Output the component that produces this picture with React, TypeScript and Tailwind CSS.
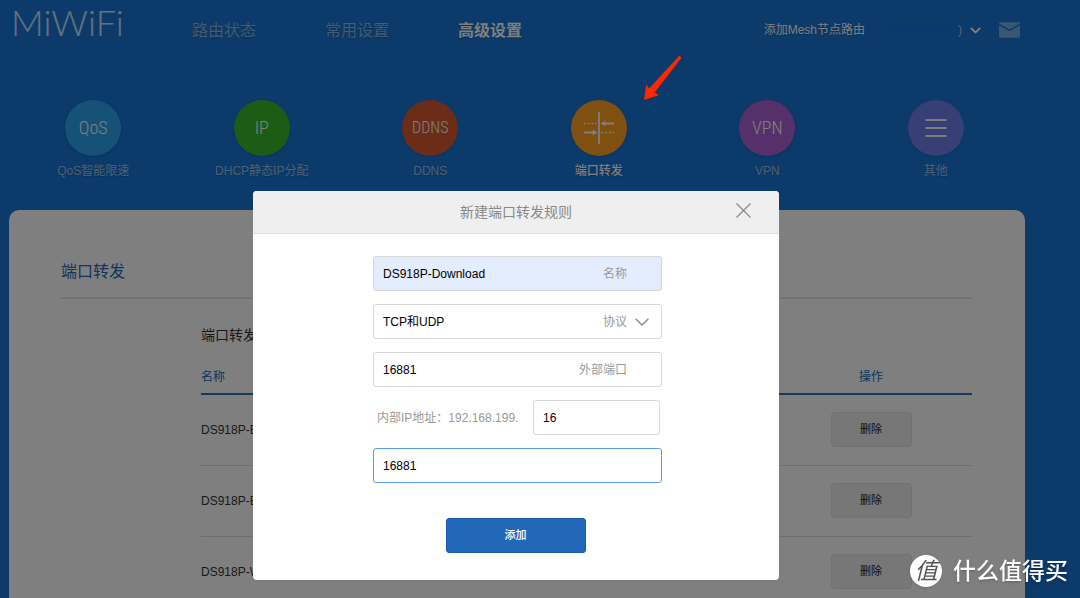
import type { ReactNode } from "react";

const navItems = [
  { name: "路由状态", active: false },
  { name: "常用设置", active: false },
  { name: "高级设置", active: true },
];

const condensed =
  "font-['Roboto_Condensed','Liberation_Sans_Narrow','Open_Sans_Condensed','DejaVu_Sans_Condensed',sans-serif]";

const features: { label: string; color: string; active?: boolean; icon: ReactNode }[] = [
  { label: "QoS智能限速", color: "bg-[#2ca2ee]", icon: <CircleText>QoS</CircleText> },
  { label: "DHCP静态IP分配", color: "bg-[#3bb828]", icon: <CircleText>IP</CircleText> },
  { label: "DDNS", color: "bg-[#d65a2e]", icon: <CircleText small>DDNS</CircleText> },
  { label: "端口转发", color: "bg-[#ffa021]", active: true, icon: <ForwardIcon /> },
  { label: "VPN", color: "bg-[#ac60d4]", icon: <CircleText>VPN</CircleText> },
  { label: "其他", color: "bg-[#707eec]", icon: <MenuIcon /> },
];

const rules = ["DS918P-BT", "DS918P-EM", "DS918P-Web"];

function CircleText({ children, small }: { children: ReactNode; small?: boolean }) {
  return (
    <span className={`leading-6 font-light ${small ? "text-base" : "text-lg"} ${condensed}`}>
      {children}
    </span>
  );
}

function ForwardIcon() {
  return (
    <svg width="32" height="32" viewBox="0 0 32 32" fill="none" stroke="currentColor">
      <path d="M16 0v32" strokeWidth="1.8" />
      <path d="M1 11.5h12.5M18.5 20.5H31" strokeWidth="1.6" strokeDasharray="1.8 1.9" />
      <path d="M22 11.5h9M1 20.5h9" strokeWidth="1.8" />
      <path d="M17.5 11.5l5-2.8v5.6zM14.8 20.5l-5-2.8v5.6z" fill="currentColor" stroke="none" />
    </svg>
  );
}

function MenuIcon() {
  return (
    <svg width="22" height="20" viewBox="0 0 22 20" stroke="currentColor" strokeWidth="1.8">
      <path d="M.5 2h21M.5 10h21M.5 18h21" />
    </svg>
  );
}

function Header() {
  return (
    <header className="flex h-[60px] items-center text-white">
      <a href="#" className="w-[183px] pb-4 pl-0.5 font-[Lato] text-[36px] leading-[44px] font-light text-white/80">
        MiWiFi
      </a>
      <nav className="flex gap-[69px] pt-0.5 text-base leading-6 text-shadow-xs">
        {navItems.map((item) => (
          <a key={item.name} href="#" className={item.active ? "font-bold" : "text-white/50"}>
            {item.name}
          </a>
        ))}
      </nav>
      <div className="ml-auto flex items-center pr-[5px] text-xs">
        <a href="#" className="text-shadow-xs">
          添加Mesh节点路由
        </a>
        <span className="ml-5 h-3.5 w-[73px] rounded-full bg-[#1573dc]" />
        <button className="flex items-center gap-2" aria-label="账户">
          <span className="text-white/60">)</span>
          <svg width="11" height="7" viewBox="0 0 11 7" fill="none" stroke="currentColor" strokeWidth="1.8">
            <path d="M.8.8l4.7 4.7L10.2.8" />
          </svg>
        </button>
        <button className="ml-[18px] text-white/40" aria-label="消息">
          <svg width="21" height="16" viewBox="0 0 22 16" fill="currentColor">
            <path d="M1.5 0h19A1.3 1.3 0 0 1 22 1.2L11 7.6 0 1.2A1.3 1.3 0 0 1 1.5 0z" />
            <path d="M0 3l11 6.3L22 3v11.5a1.5 1.5 0 0 1-1.5 1.5h-19A1.5 1.5 0 0 1 0 14.500z" />
          </svg>
        </button>
      </div>
    </header>
  );
}

function FeatureTabs() {
  return (
    <div className="grid grid-cols-6 pt-10 pr-[5px] pb-[31px] text-white">
      {features.map((f) => (
        <a key={f.label} href="#" className="flex flex-col items-center gap-[7px]">
          <span className={`flex size-14 items-center justify-center rounded-full shadow-sm ${f.color}`}>
            {f.icon}
          </span>
          <span
            className={`text-xs leading-4 text-shadow-xs ${f.active ? "font-medium" : "text-white/60"}`}
          >
            {f.label}
          </span>
        </a>
      ))}
    </div>
  );
}

function RulePanel() {
  return (
    <main className="flex-1 rounded-t-[10px] bg-white pt-[50px] pr-[53px] pl-[52px]">
      <h1 className="border-b-2 border-[#e8e8e8] pb-[13px] text-base leading-6 text-[#2468b8]">端口转发</h1>
      <section className="pt-[26px] pl-[140px]">
        <h2 className="text-sm leading-5 text-[#333]">端口转发规则列表</h2>
        <table className="mt-4 w-full text-xs">
          <thead>
            <tr className="h-[33px] border-b-2 border-[#2c72c0] text-[#2468b8]">
              <th className="text-left font-normal">名称</th>
              <th className="w-[202px] text-center font-normal">操作</th>
            </tr>
          </thead>
          <tbody>
            {rules.map((name) => (
              <tr key={name} className="h-[71px] border-b border-[#dcdcdc]">
                <td className="text-[#333]">{name}</td>
                <td className="text-center">
                  <button className="h-[35px] w-[81px] rounded border border-[#e2e2e2] bg-[#efefef] text-[11px] text-[#222]">
                    删除
                  </button>
                </td>
              </tr>
            ))}
          </tbody>
        </table>
      </section>
    </main>
  );
}

const box = "flex h-[35px] items-center rounded-[3px] border pl-[9px] leading-4";

function RuleDialog() {
  return (
    <div className="fixed inset-0 flex items-start justify-center bg-black/50 pt-[191px] pr-12">
      <div role="dialog" aria-label="新建端口转发规则" className="w-[526px] overflow-hidden rounded bg-white">
        <div className="grid h-[43px] grid-cols-[1fr_auto_1fr] items-center border-b border-[#e0e0e0] bg-[#efefef]">
          <h2 className="col-start-2 text-sm leading-5 text-[#888]">新建端口转发规则</h2>
          <button className="mr-7 mb-1 justify-self-end text-[#888]" aria-label="关闭">
            <svg width="15" height="15" viewBox="0 0 15 15" stroke="currentColor" strokeWidth="1.2">
              <path d="M.5.5l14 14M14.500.5L.5 14.500" />
            </svg>
          </button>
        </div>
        <form className="flex flex-col gap-[13px] pt-[22px] pr-[117px] pb-[27px] pl-[120px] text-xs text-black">
          <div className={`${box} border-[#d8d8d8] bg-[#e4edfd] pr-[34px]`}>
            <input id="name" defaultValue="DS918P-Download" className="min-w-0 flex-1 outline-none" />
            <label htmlFor="name" className="text-[#999]">
              名称
            </label>
          </div>
          <div className={`${box} border-[#d8d8d8] pr-3`}>
            <select id="proto" className="min-w-0 flex-1 appearance-none outline-none">
              <option>TCP和UDP</option>
            </select>
            <label htmlFor="proto" className="text-[#999]">
              协议
            </label>
            <svg
              className="ml-2 text-[#888]"
              width="14"
              height="8"
              viewBox="0 0 14 8"
              fill="none"
              stroke="currentColor"
              strokeWidth="1.3"
            >
              <path d="M.6.8L7 7 13.400.8" />
            </svg>
          </div>
          <div className={`${box} border-[#d8d8d8] pr-[34px]`}>
            <input id="outer" defaultValue="16881" className="min-w-0 flex-1 outline-none" />
            <label htmlFor="outer" className="text-[#999]">
              外部端口
            </label>
          </div>
          <div className="flex items-center justify-between pr-0.5 pl-1">
            <label htmlFor="ip" className="text-[#999]">
              内部IP地址：192.168.199.
            </label>
            <div className={`${box} w-[127px] border-[#d8d8d8]`}>
              <input id="ip" defaultValue="16" className="min-w-0 flex-1 outline-none" />
            </div>
          </div>
          <div className={`${box} border-[#5b9df0]`}>
            <input aria-label="内部端口" defaultValue="16881" className="min-w-0 flex-1 outline-none" />
          </div>
          <button
            type="button"
            className="mt-[22px] mr-1 h-[35px] w-[140px] self-center rounded-[3px] border border-[#1a5aa8] bg-[#2367b8] text-[11px] font-medium text-white"
          >
            添加
          </button>
        </form>
      </div>
    </div>
  );
}

function PointerArrow() {
  return (
    <svg className="absolute top-[55px] left-[643px]" width="40" height="46" viewBox="0 0 40 46" fill="#ff2600">
      <path d="M1 45L3.200 29.500 6.200 33.400 35.500 1.500c1-1.300 3.300.1 2.500 1.900L11.500 37.800 16.200 40z" />
    </svg>
  );
}

function Watermark() {
  return (
    <div className="absolute right-3 bottom-[11px] flex items-center gap-[11px] text-white">
      <span className="flex size-8 items-center justify-center rounded-full bg-white text-[23px] leading-8 text-[#555] italic shadow-sm">
        值
      </span>
      <span className="text-[23px] leading-8 font-medium text-shadow-md">什么值得买</span>
    </div>
  );
}

export default function App() {
  return (
    <div className="relative h-screen overflow-hidden bg-[#1675d7] font-['Liberation_Sans','Noto_Sans_CJK_SC',sans-serif]">
      <div className="mr-[55px] ml-[9px] flex min-h-full flex-col">
        <Header />
        <FeatureTabs />
        <RulePanel />
      </div>
      <RuleDialog />
      <PointerArrow />
      <Watermark />
    </div>
  );
}
